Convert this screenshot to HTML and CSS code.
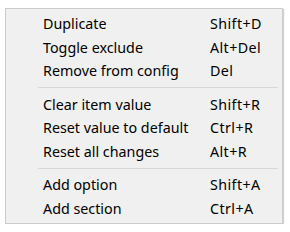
FILE: index.html
```html
<!DOCTYPE html>
<html>
<head>
    <meta charset="UTF-8">
    <title>Menu</title>
    <link rel="stylesheet" href="styles.css">
</head>
<body>
    <div class="context-menu">
        <div class="menu-item"><span class="label">Duplicate</span><span class="shortcut">Shift+D</span></div>
        <div class="menu-item"><span class="label">Toggle exclude</span><span class="shortcut">Alt+Del</span></div>
        <div class="menu-item"><span class="label">Remove from config</span><span class="shortcut">Del</span></div>
        <div class="separator"></div>
        <div class="menu-item"><span class="label">Clear item value</span><span class="shortcut">Shift+R</span></div>
        <div class="menu-item"><span class="label">Reset value to default</span><span class="shortcut">Ctrl+R</span></div>
        <div class="menu-item"><span class="label">Reset all changes</span><span class="shortcut">Alt+R</span></div>
        <div class="separator"></div>
        <div class="menu-item"><span class="label">Add option</span><span class="shortcut">Shift+A</span></div>
        <div class="menu-item"><span class="label">Add section</span><span class="shortcut">Ctrl+A</span></div>
    </div>
</body>
</html>
```

FILE: styles.css
```css
body {
    margin: 0;
    background: #ffffff;
}

.context-menu {
    font-family: "Noto Sans", sans-serif;
    font-size: 14.3px;
    color: #000000;
    background: #f0f0f0;
    border: 1px solid #cccccc;
    box-shadow: 1px 1px 1px rgba(0, 0, 0, 0.18);
    width: 276px;
    margin: 8px 0 0 5px;
    padding: 3px 0;
}

.menu-item {
    display: flex;
    align-items: center;
    height: 23.5px;
    padding-left: 37px;
}

.label {
    width: 167px;
    white-space: nowrap;
}

.shortcut {
    white-space: nowrap;
    letter-spacing: 0.4px;
}

.separator {
    height: 1px;
    background: #d7d7d7;
    margin: 4.5px 4px 4.5px 32px;
}
```
